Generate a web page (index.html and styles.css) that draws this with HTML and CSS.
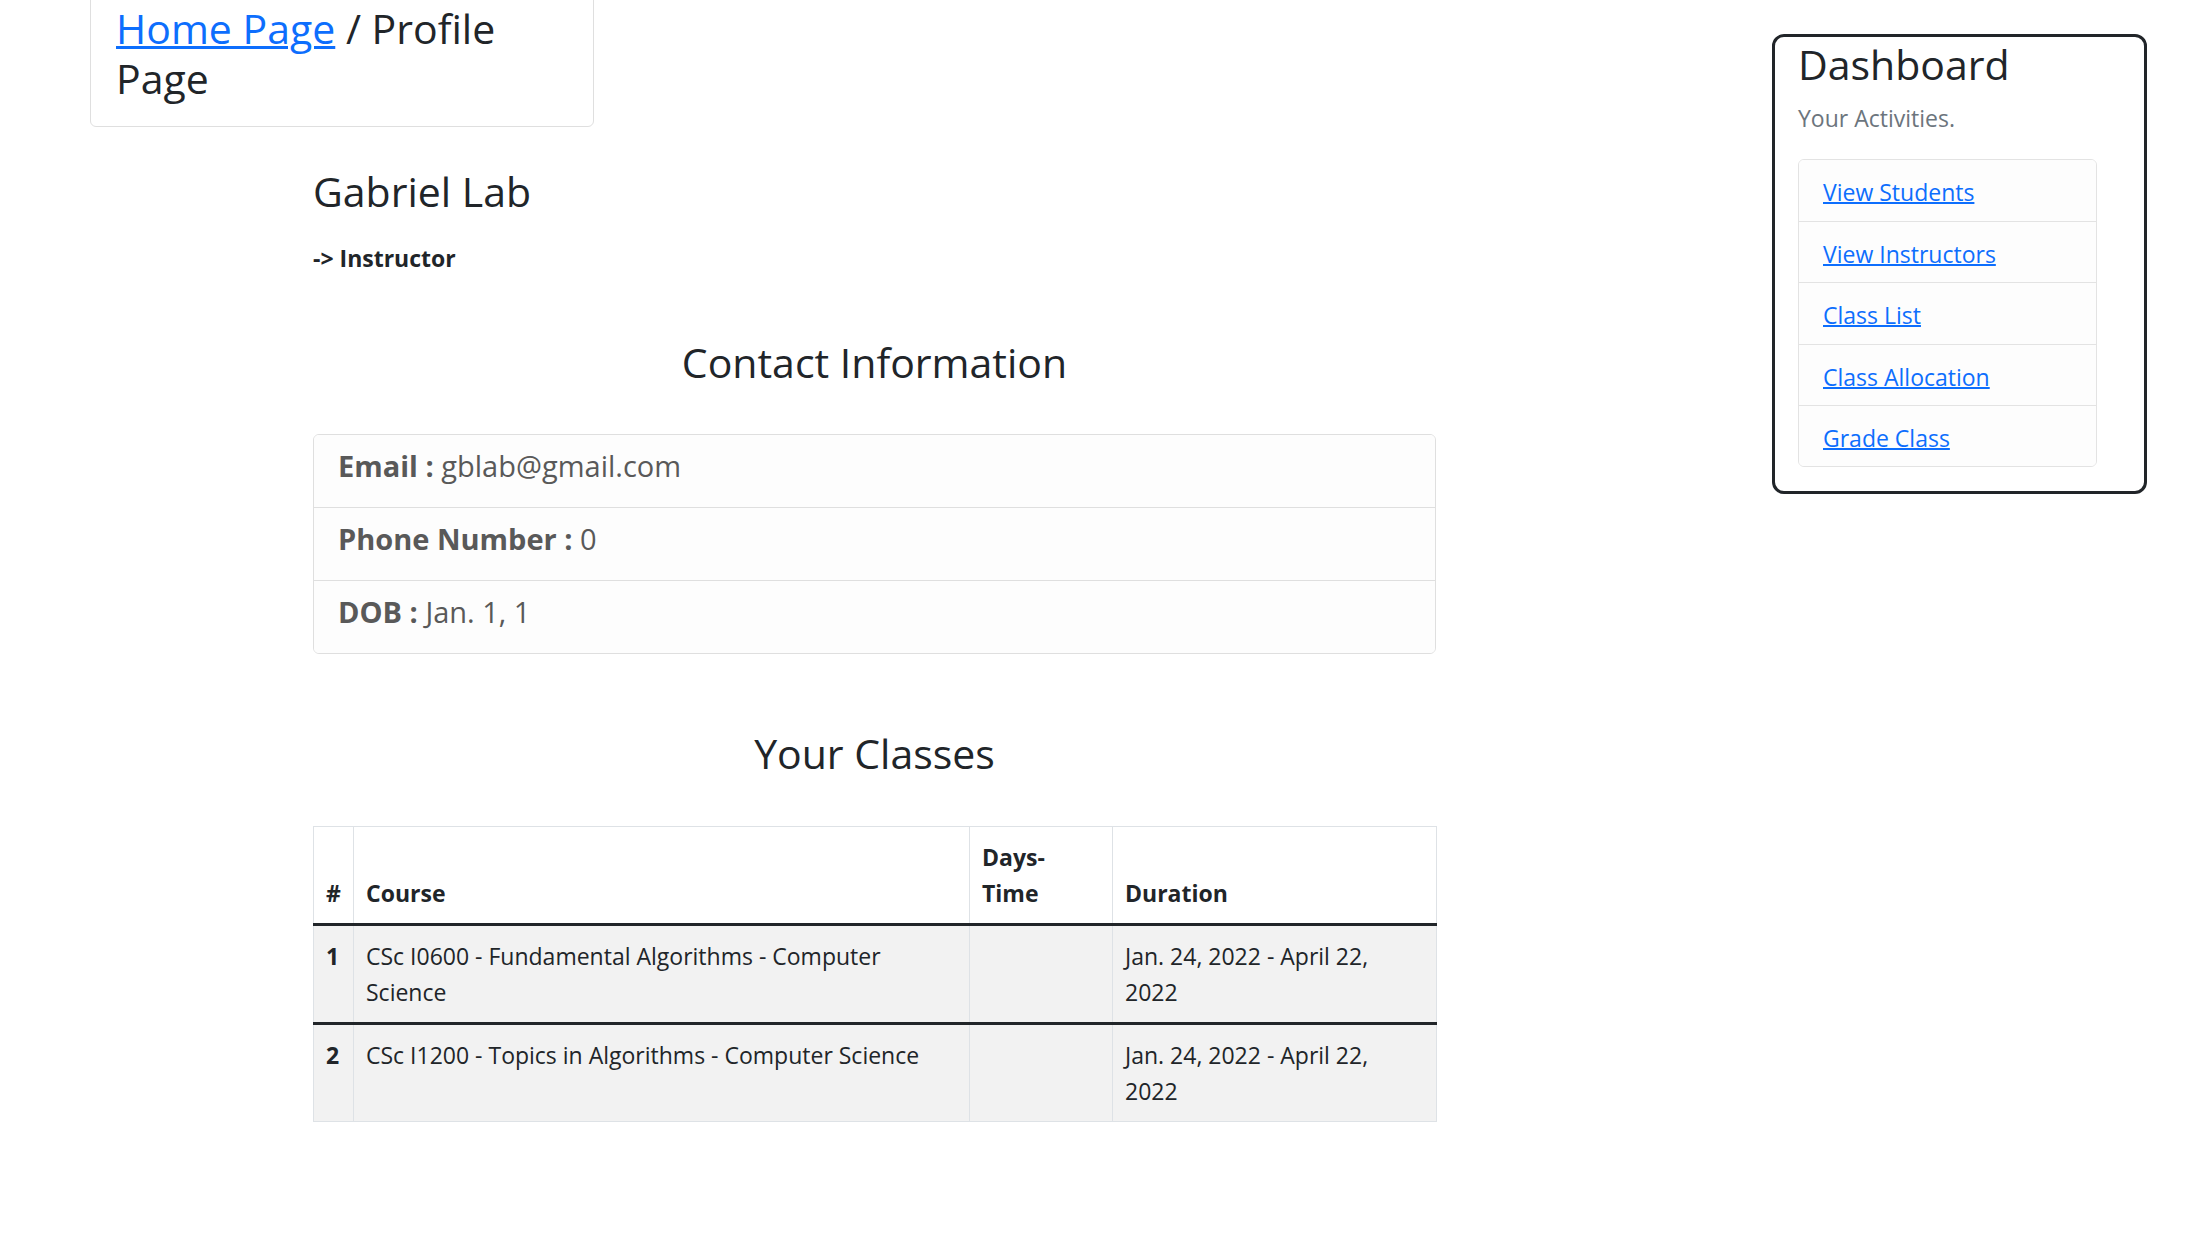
FILE: index.html
```html
<!DOCTYPE html>
<html lang="en">
<head>
<meta charset="utf-8">
<title>Profile Page</title>
<link rel="stylesheet" href="styles.css">
</head>
<body>
<div class="page">
  <div class="main">
    <div class="crumb">
      <h3 class="crumb-title"><a href="#">Home Page</a> / Profile Page</h3>
    </div>
    <div class="profile">
      <h3 class="name">Gabriel Lab</h3>
      <p class="role">-&gt; Instructor</p>

      <h3 class="section-title contact-title">Contact Information</h3>
      <ul class="contact-list">
        <li class="contact-item"><h5 class="contact-line"><b>Email :</b> gblab@gmail.com</h5></li>
        <li class="contact-item"><h5 class="contact-line"><b>Phone Number :</b> 0</h5></li>
        <li class="contact-item"><h5 class="contact-line"><b>DOB :</b> Jan. 1, 1</h5></li>
      </ul>

      <h3 class="section-title classes-title">Your Classes</h3>
      <table class="classes">
        <colgroup>
          <col class="c-num">
          <col class="c-course">
          <col class="c-days">
          <col class="c-dur">
        </colgroup>
        <thead>
          <tr>
            <th>#</th>
            <th>Course</th>
            <th>Days-<br>Time</th>
            <th>Duration</th>
          </tr>
        </thead>
        <tbody>
          <tr>
            <th class="rownum">1</th>
            <td>CSc I0600 - Fundamental Algorithms - Computer Science</td>
            <td></td>
            <td class="dur">Jan. 24, 2022 - April 22, 2022</td>
          </tr>
        </tbody>
        <tbody>
          <tr>
            <th class="rownum">2</th>
            <td>CSc I1200 - Topics in Algorithms - Computer Science</td>
            <td></td>
            <td class="dur">Jan. 24, 2022 - April 22, 2022</td>
          </tr>
        </tbody>
      </table>
    </div>
  </div>

  <aside class="dash">
    <h3 class="dash-title">Dashboard</h3>
    <p class="dash-sub">Your Activities.</p>
    <ul class="dash-links">
      <li class="dash-item"><a href="#">View Students</a></li>
      <li class="dash-item"><a href="#">View Instructors</a></li>
      <li class="dash-item"><a href="#">Class List</a></li>
      <li class="dash-item"><a href="#">Class Allocation</a></li>
      <li class="dash-item"><a href="#">Grade Class</a></li>
    </ul>
  </aside>
</div>
</body>
</html>
```

FILE: styles.css
```css
* {
  box-sizing: border-box;
}

html, body {
  margin: 0;
  padding: 0;
  background: #fff;
}

body {
  font-family: "Open Sans", "Segoe UI", "Noto Sans", sans-serif;
  font-size: 23px;
  line-height: 36px;
  color: #212529;
}

a {
  color: #0d6efd;
  text-decoration: underline;
  text-decoration-thickness: 0.07em;
}

h3 {
  font-size: 41px;
  line-height: 50.4px;
  font-weight: 400;
  margin: 0;
}

.page {
  display: flex;
  justify-content: space-between;
  align-items: flex-start;
}

.main {
  padding-left: 90px;
}

.crumb {
  width: 504px;
  margin-top: -22px;
  padding: 24px 24px 22px 25px;
  border: 1px solid #dfdfdf;
  border-radius: 6px;
}

.profile {
  margin-left: 223px;
  width: 1123px;
  margin-top: 39px;
}

.name {
  margin-bottom: 24px;
}

.role {
  margin: 0;
  font-weight: 700;
}

.section-title {
  text-align: center;
}

.contact-title {
  margin: 61px 0 46px;
}

.classes-title {
  margin: 74px 0 48px;
}

.contact-list {
  list-style: none;
  margin: 0;
  padding: 0;
  border: 1px solid #dfdfdf;
  border-radius: 6px;
  overflow: hidden;
}

.contact-item {
  padding: 13px 24px 11px;
  background: #fdfdfd;
}

.contact-item + .contact-item {
  border-top: 1px solid #dfdfdf;
}

.contact-line {
  margin: 0 0 12px;
  font-size: 29px;
  line-height: 36px;
  font-weight: 400;
  color: #595959;
}

.contact-line b {
  font-weight: 700;
}

.classes {
  width: 1123px;
  table-layout: fixed;
  border-collapse: collapse;
  border: 1px solid #dee2e6;
}

.c-num { width: 40px; }
.c-course { width: 616px; }
.c-days { width: 143px; }
.c-dur { width: 324px; }

.classes th,
.classes td {
  padding: 12px;
  border: 1px solid #dee2e6;
  text-align: left;
  vertical-align: top;
}

.classes .dur {
  padding-right: 16px;
}

.classes thead th {
  vertical-align: bottom;
  font-weight: 700;
  background: #fff;
}

.classes tbody {
  border-top: 3px solid #212529;
}

.classes tbody th,
.classes tbody td {
  background: #f2f2f2;
}

.classes .rownum {
  font-weight: 700;
}

.dash {
  width: 375px;
  margin: 34px 62px 0 0;
  padding: 2px 24px 24px 23px;
  border: 3px solid #212529;
  border-radius: 12px;
}

.dash-title {
  margin-bottom: 11px;
}

.dash-sub {
  margin: 0 0 23px;
  color: #6c757d;
}

.dash-links {
  list-style: none;
  margin: 0;
  padding: 0;
  width: 299px;
  border: 1px solid #e3e3e3;
  border-radius: 6px;
  overflow: hidden;
}

.dash-item {
  padding: 14px 24px 10px;
  line-height: 36.4px;
  background: #fdfdfd;
}

.dash-item + .dash-item {
  border-top: 1px solid #e3e3e3;
}
```
